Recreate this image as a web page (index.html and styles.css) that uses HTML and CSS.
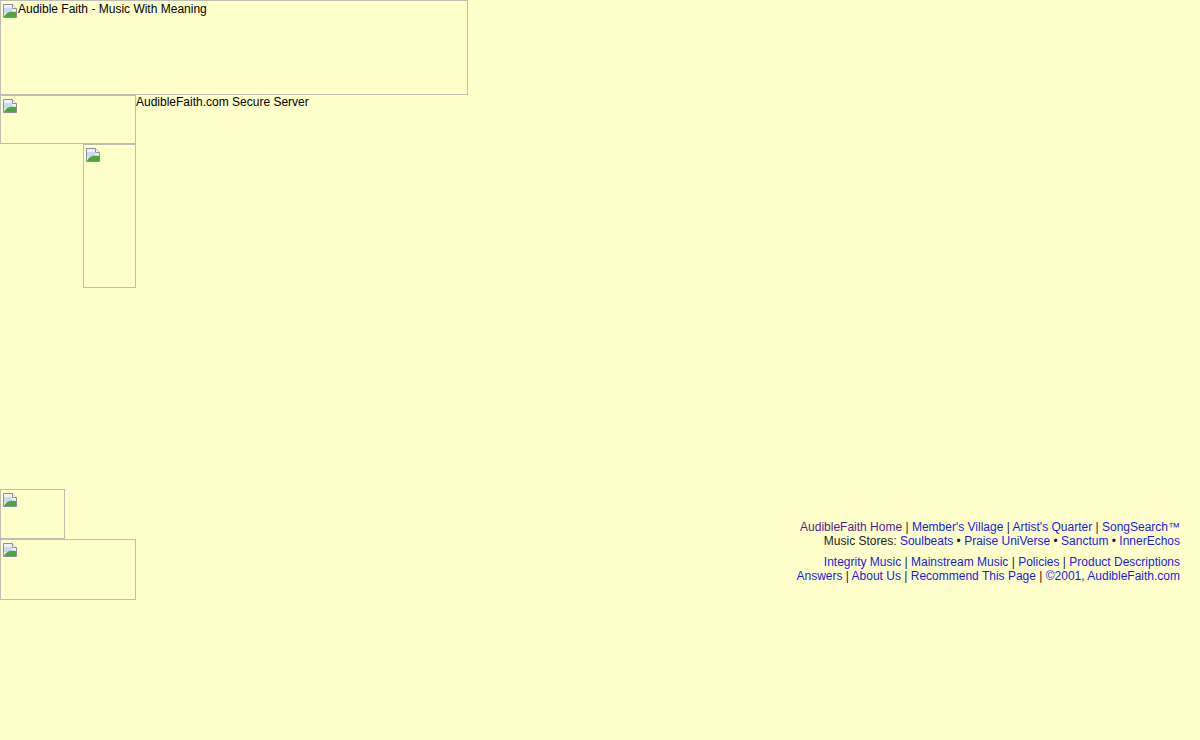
FILE: index.html
```html
<!DOCTYPE html>
<html>
<head>
    <title>AudibleFaith.com Secure Server</title>
    <link rel="stylesheet" href="styles.css">
</head>
<body>
    <div class="page">
        <div class="img-box banner">
            <svg class="broken" viewBox="0 0 16 16"><path d="M1.5 1.5h9l4 4v9h-13z" fill="#eef2fb" stroke="#8a8f99"/><path d="M10.5 1.5v4h4" fill="#fff" stroke="#8a8f99"/><path d="M2 5h8v5H2z" fill="#c9d9f2"/><path d="M2 14c2-5 6-6 12-5v5z" fill="#4ea63a"/></svg>
            <span>Audible Faith - Music With Meaning</span>
        </div>

        <div class="secure-row">
            <div class="img-box side-top">
                <svg class="broken" viewBox="0 0 16 16"><path d="M1.5 1.5h9l4 4v9h-13z" fill="#eef2fb" stroke="#8a8f99"/><path d="M10.5 1.5v4h4" fill="#fff" stroke="#8a8f99"/><path d="M2 5h8v5H2z" fill="#c9d9f2"/><path d="M2 14c2-5 6-6 12-5v5z" fill="#4ea63a"/></svg>
            </div>
            <span class="secure-title">AudibleFaith.com Secure Server</span>
        </div>

        <div class="img-box side-tall">
            <svg class="broken" viewBox="0 0 16 16"><path d="M1.5 1.5h9l4 4v9h-13z" fill="#eef2fb" stroke="#8a8f99"/><path d="M10.5 1.5v4h4" fill="#fff" stroke="#8a8f99"/><path d="M2 5h8v5H2z" fill="#c9d9f2"/><path d="M2 14c2-5 6-6 12-5v5z" fill="#4ea63a"/></svg>
        </div>

        <div class="content"></div>

        <div class="footer">
            <div class="footer-images">
                <div class="img-box foot-small">
                    <svg class="broken" viewBox="0 0 16 16"><path d="M1.5 1.5h9l4 4v9h-13z" fill="#eef2fb" stroke="#8a8f99"/><path d="M10.5 1.5v4h4" fill="#fff" stroke="#8a8f99"/><path d="M2 5h8v5H2z" fill="#c9d9f2"/><path d="M2 14c2-5 6-6 12-5v5z" fill="#4ea63a"/></svg>
                </div>
                <div class="img-box foot-wide">
                    <svg class="broken" viewBox="0 0 16 16"><path d="M1.5 1.5h9l4 4v9h-13z" fill="#eef2fb" stroke="#8a8f99"/><path d="M10.5 1.5v4h4" fill="#fff" stroke="#8a8f99"/><path d="M2 5h8v5H2z" fill="#c9d9f2"/><path d="M2 14c2-5 6-6 12-5v5z" fill="#4ea63a"/></svg>
                </div>
            </div>

            <div class="footer-links">
                <p>
                    <a href="#" class="visited">AudibleFaith Home</a> |
                    <a href="#">Member's Village</a> |
                    <a href="#">Artist's Quarter</a> |
                    <a href="#">SongSearch&trade;</a><br>
                    Music Stores:
                    <a href="#">Soulbeats</a> &bull;
                    <a href="#">Praise UniVerse</a> &bull;
                    <a href="#">Sanctum</a> &bull;
                    <a href="#">InnerEchos</a>
                </p>
                <p>
                    <a href="#">Integrity Music</a> |
                    <a href="#">Mainstream Music</a> |
                    <a href="#">Policies</a> |
                    <a href="#">Product Descriptions</a><br>
                    <a href="#">Answers</a> |
                    <a href="#">About Us</a> |
                    <a href="#">Recommend This Page</a> |
                    <a href="#">&copy;2001, AudibleFaith.com</a>
                </p>
            </div>
        </div>
    </div>
</body>
</html>
```

FILE: styles.css
```css
body {
    margin: 0;
    padding: 0;
    background: #ffffcc;
    color: #000;
    font-family: "Liberation Sans", Arial, sans-serif;
    font-size: 12px;
    line-height: 14px;
}

/* broken image placeholders */
.img-box {
    box-sizing: border-box;
    border: 1px solid #bdbdb0;
    display: flex;
    align-items: flex-start;
    padding: 1px;
}

.broken {
    width: 16px;
    height: 16px;
    flex: none;
    margin-top: 1px;
}

.banner {
    width: 468px;
    height: 95px;
}

.secure-row {
    display: flex;
    align-items: flex-start;
}

.side-top {
    width: 136px;
    height: 49px;
}

.side-tall {
    width: 53px;
    height: 144px;
    margin-left: 83px;
}

.content {
    height: 201px;
}

.footer {
    display: flex;
    justify-content: space-between;
    align-items: flex-start;
    padding-right: 20px;
}

.foot-small {
    width: 65px;
    height: 50px;
}

.foot-wide {
    width: 136px;
    height: 61px;
}

.footer-links {
    text-align: right;
    margin-top: 31px;
    color: #222;
}

.footer-links p {
    margin: 0 0 7px;
}

.footer-links a {
    color: #1a1ae0;
    text-decoration: none;
}

.footer-links a.visited {
    color: #551a8b;
}
```
